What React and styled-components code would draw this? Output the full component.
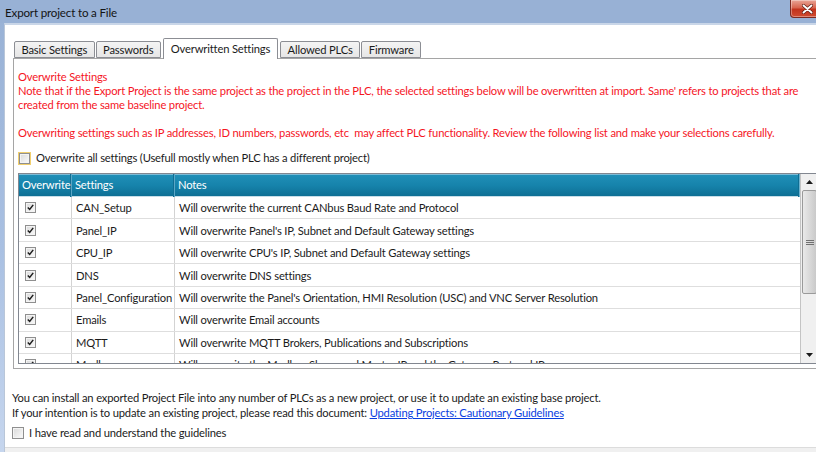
import React from 'react';
import styled, { createGlobalStyle } from 'styled-components';

const GlobalStyle = createGlobalStyle`
  html, body {
    margin: 0;
    padding: 0;
    background: #ffffff;
  }
  body {
    font-family: Lato, "Liberation Sans", sans-serif;
    font-size: 11.2px;
    letter-spacing: -0.17px;
    color: #1b1b1b;
    overflow: hidden;
  }
`;

const Screen = styled.div`
  width: 816px;
  height: 452px;
  overflow: hidden;
`;

const Window = styled.div`
  width: 836px;
  height: 452px;
  box-sizing: border-box;
  display: flex;
  flex-direction: column;
  padding: 0 4px 0 4px;
  background: linear-gradient(#98b1d5 0%, #a9c0e2 55%, #c6d6ee 100%);
`;

const TitleBar = styled.div`
  height: 23px;
  display: flex;
  align-items: flex-start;
  margin: 0 -4px;
  padding-left: 5px;
  background: #98b1d5;
`;

const Title = styled.span`
  line-height: 25px;
  color: #141414;
  font-size: 11.6px;
`;

const CloseButton = styled.div`
  margin-left: auto;
  margin-right: 12px;
  width: 34px;
  height: 18px;
  box-sizing: border-box;
  border: 1px solid #7a2a22;
  border-top: none;
  border-radius: 0 0 4px 4px;
  background: linear-gradient(#e9a597 0%, #d8654f 45%, #c2331d 55%, #d14b30 100%);
  box-shadow: inset 0 0 0 1px rgba(255, 255, 255, 0.35);
  display: flex;
  align-items: center;
  justify-content: center;
  flex-shrink: 0;
`;

const Client = styled.div`
  flex: 1;
  display: flex;
  flex-direction: column;
  background: #ffffff;
  border-top: 2px solid #c9d6e8;
  border-left: 1px solid #b9c6d8;
  min-height: 0;
`;

const TabRow = styled.div`
  display: flex;
  align-items: flex-end;
  gap: 1px;
  height: 20px;
  margin-top: 13px;
  padding-left: 9px;
  position: relative;
  z-index: 1;
`;

const Tab = styled.div`
  box-sizing: border-box;
  height: ${({ $active }) => ($active ? '21px' : '17px')};
  margin: ${({ $active }) => ($active ? '0 1px -1px 1px' : '0')};
  padding: ${({ $active }) => ($active ? '0 7px' : '0 6.5px')};
  border: 1px solid #8c8e94;
  border-bottom: ${({ $active }) => ($active ? 'none' : '1px solid #8c8e94')};
  border-radius: 2px 2px 0 0;
  background: ${({ $active }) =>
    $active ? '#ffffff' : 'linear-gradient(#f4f4f4, #e6e6e6)'};
  line-height: ${({ $active }) => ($active ? '19px' : '15px')};
  color: #1b1b1b;
  white-space: nowrap;
  position: relative;
  z-index: ${({ $active }) => ($active ? 2 : 1)};
`;

const Panel = styled.div`
  margin: 0 8px 0 8px;
  height: 311px;
  box-sizing: border-box;
  border: 1px solid #a5a5a5;
  padding: 11px 4px 0 4px;
  display: flex;
  flex-direction: column;
`;

const RedText = styled.div`
  color: #f5161f;
  line-height: 14px;
  white-space: nowrap;
  margin-top: ${({ $gap }) => $gap || 0}px;
`;

const CheckRow = styled.label`
  display: flex;
  align-items: center;
  gap: 5px;
  height: 14px;
  margin-top: ${({ $gap }) => $gap || 0}px;
  white-space: nowrap;
  line-height: 14px;
`;

const Box = styled.span`
  width: ${({ $size }) => $size}px;
  height: ${({ $size }) => $size}px;
  box-sizing: border-box;
  flex-shrink: 0;
  margin: ${({ $hot }) => ($hot ? '0 1px' : '0')};
  border: 1px solid #8f8f8f;
  outline: ${({ $hot }) => ($hot ? '1px solid #f1cf6e' : 'none')};
  background: linear-gradient(135deg, #d9d9d9, #fbfbfb);
  box-shadow: inset 0 0 0 1px #f4f4f4;
  display: flex;
  align-items: center;
  justify-content: center;
`;

const Table = styled.div`
  margin-top: 8px;
  height: 191px;
  box-sizing: border-box;
  border: 1px solid #828790;
  display: flex;
  overflow: hidden;
`;

const Grid = styled.div`
  flex: 1;
  display: flex;
  flex-direction: column;
  overflow: hidden;
`;

const HeaderRow = styled.div`
  display: grid;
  grid-template-columns: 53px 103px 1fr;
  height: 23px;
  flex-shrink: 0;
  background: linear-gradient(#2190b8 0%, #1683ab 50%, #0d6d92 100%);
  box-shadow: inset 0 1px 0 #7dbbd6, inset 0 -1px 0 #c7dde8;
`;

const HeaderCell = styled.div`
  color: #ffffff;
  padding-left: 3px;
  line-height: 22px;
  white-space: nowrap;
  overflow: hidden;
  border-right: 1px solid #5aa6c6;
  box-shadow: inset -1px 0 0 #0f6e93;
  &:last-child {
    border-right: 1px solid #6cb2cf;
  }
`;

const Row = styled.div`
  display: grid;
  grid-template-columns: 53px 103px 1fr;
  height: 22.45px;
  flex-shrink: 0;
  box-sizing: border-box;
  border-bottom: 1px solid #dedede;
`;

const Cell = styled.div`
  display: flex;
  align-items: center;
  padding-left: ${({ $pad }) => $pad}px;
  white-space: nowrap;
  overflow: hidden;
  border-right: 1px solid #d3d3d3;
  &:last-child {
    border-right: none;
  }
`;

const ScrollBar = styled.div`
  width: 17px;
  flex-shrink: 0;
  display: flex;
  flex-direction: column;
  background: #f0f0f0;
  border-left: 1px solid #c4c4c4;
`;

const ArrowButton = styled.div`
  height: 16px;
  display: flex;
  align-items: center;
  justify-content: center;
`;

const Thumb = styled.div`
  height: 104px;
  margin: 0 1px;
  box-sizing: border-box;
  border: 1px solid #9a9a9a;
  border-radius: 2px;
  background: linear-gradient(90deg, #e9e9e9, #d6d6d6 60%, #c9c9c9);
  display: flex;
  align-items: center;
  justify-content: center;
`;

const Track = styled.div`
  flex: 1;
`;

const Footer = styled.div`
  padding: 21px 8px 0 7px;
  line-height: 15px;
  white-space: nowrap;
`;

const Link = styled.a`
  color: #0a3ee0;
  text-decoration: underline;
`;

const BottomStrip = styled.div`
  margin-top: auto;
  height: 4px;
  border-top: 1px solid #dcdcdc;
  background: #f0f0f0;
`;

const Check = () => (
  <svg width="7" height="7" viewBox="0 0 7 7">
    <path d="M0.8 3.4 L2.7 5.4 L6.2 0.9" fill="none" stroke="#1c1c1c" strokeWidth="1.5" />
  </svg>
);

const rows = [
  ['CAN_Setup', 'Will overwrite the current CANbus Baud Rate and Protocol'],
  ['Panel_IP', "Will overwrite Panel's IP, Subnet and Default Gateway settings"],
  ['CPU_IP', "Will overwrite CPU's IP, Subnet and Default Gateway settings"],
  ['DNS', 'Will overwrite DNS settings'],
  ['Panel_Configuration', "Will overwrite the Panel's Orientation, HMI Resolution (USC) and VNC Server Resolution"],
  ['Emails', 'Will overwrite Email accounts'],
  ['MQTT', 'Will overwrite MQTT Brokers, Publications and Subscriptions'],
  ['Modbus', 'Will overwrite the Modbus Slaves and Master IP and the Gateway Protocol IP'],
];

const tabs = ['Basic Settings', 'Passwords', 'Overwritten Settings', 'Allowed PLCs', 'Firmware'];

export default function App() {
  return (
    <Screen>
      <GlobalStyle />
      <Window>
        <TitleBar>
          <Title>Export project to a File</Title>
          <CloseButton>
            <svg width="11" height="10" viewBox="0 0 11 10">
              <path d="M1.5 1.5 L9.5 8.5 M9.5 1.5 L1.5 8.5" stroke="#5a1a12" strokeWidth="3.2" strokeLinecap="round" />
              <path d="M1.5 1.5 L9.5 8.5 M9.5 1.5 L1.5 8.5" stroke="#ffffff" strokeWidth="1.9" strokeLinecap="round" />
            </svg>
          </CloseButton>
        </TitleBar>
        <Client>
          <TabRow>
            {tabs.map((t) => (
              <Tab key={t} $active={t === 'Overwritten Settings'}>
                {t}
              </Tab>
            ))}
          </TabRow>
          <Panel>
            <RedText>Overwrite Settings</RedText>
            <RedText>
              Note that if the Export Project is the same project as the project in the PLC, the selected settings below will be overwritten at import. Same' refers to projects that are
            </RedText>
            <RedText>created from the same baseline project.</RedText>
            <RedText $gap={14}>
              Overwriting settings such as IP addresses, ID numbers, passwords, etc&nbsp; may affect PLC functionality. Review the following list and make your selections carefully.
            </RedText>
            <CheckRow $gap={11}>
              <Box $size={11} $hot />
              Overwrite all settings (Usefull mostly when PLC has a different project)
            </CheckRow>
            <Table>
              <Grid>
                <HeaderRow>
                  <HeaderCell>Overwrite</HeaderCell>
                  <HeaderCell>Settings</HeaderCell>
                  <HeaderCell>Notes</HeaderCell>
                </HeaderRow>
                {rows.map(([name, note]) => (
                  <Row key={name}>
                    <Cell $pad={6}>
                      <Box $size={11}>
                        <Check />
                      </Box>
                    </Cell>
                    <Cell $pad={4}>{name}</Cell>
                    <Cell $pad={4}>{note}</Cell>
                  </Row>
                ))}
              </Grid>
              <ScrollBar>
                <ArrowButton>
                  <svg width="7" height="4" viewBox="0 0 7 4">
                    <path d="M0 4 L3.5 0 L7 4 Z" fill="#1a1a1a" />
                  </svg>
                </ArrowButton>
                <Thumb>
                  <svg width="8" height="5" viewBox="0 0 8 5">
                    <path d="M0 0.5 H8 M0 2.5 H8 M0 4.5 H8" stroke="#707070" strokeWidth="1" />
                  </svg>
                </Thumb>
                <Track />
                <ArrowButton>
                  <svg width="7" height="4" viewBox="0 0 7 4">
                    <path d="M0 0 L3.5 4 L7 0 Z" fill="#1a1a1a" />
                  </svg>
                </ArrowButton>
              </ScrollBar>
            </Table>
          </Panel>
          <Footer>
            <div>You can install an exported Project File into any number of PLCs as a new project, or use it to update an existing base project.</div>
            <div>
              If your intention is to update an existing project, please read this document:{' '}
              <Link href="#">Updating Projects: Cautionary Guidelines</Link>
            </div>
            <CheckRow $gap={6}>
              <Box $size={12} />
              I have read and understand the guidelines
            </CheckRow>
          </Footer>
          <BottomStrip />
        </Client>
      </Window>
    </Screen>
  );
}
